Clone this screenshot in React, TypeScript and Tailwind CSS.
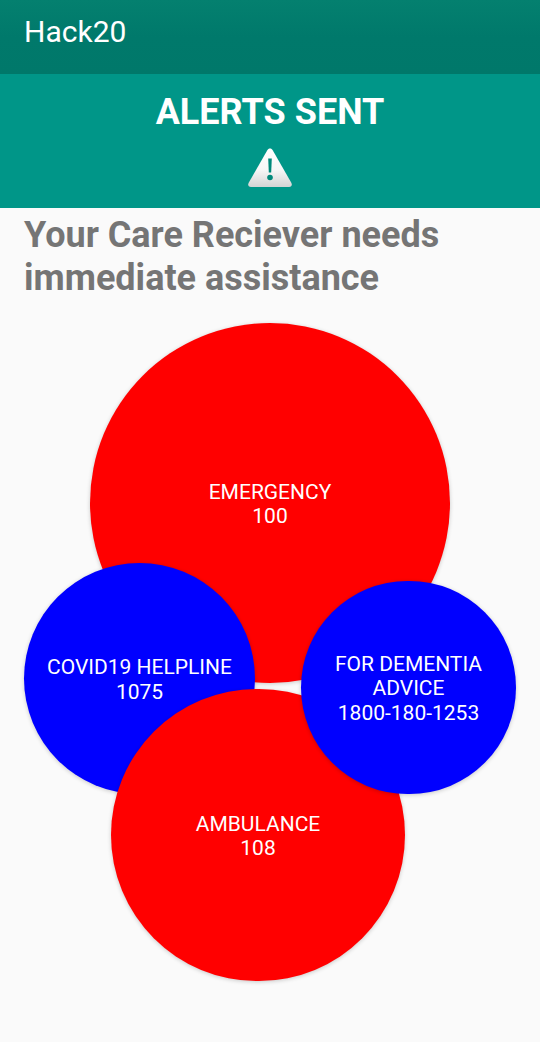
import React from 'react';

interface CircleProps {
  lines: string[];
  className: string;
}

const Circle: React.FC<CircleProps> = ({ lines, className }) => (
  <div
    className={`absolute flex flex-col items-center justify-center rounded-full pt-[2px] text-center text-[21px] leading-[24.5px] text-white shadow-[0_1px_4px_rgba(0,0,0,0.2)] ${className}`}
  >
    {lines.map((line) => (
      <span key={line} className="whitespace-nowrap">
        {line}
      </span>
    ))}
  </div>
);

const WarningIcon = () => (
  <svg width="46" height="42" viewBox="0 0 46 42">
    <defs>
      <linearGradient id="warn" x1="0" y1="0" x2="0" y2="1">
        <stop offset="0" stopColor="#ffffff" />
        <stop offset="0.55" stopColor="#f7f7f7" />
        <stop offset="1" stopColor="#d4d4d4" />
      </linearGradient>
    </defs>
    <path
      d="M23 1.5c1.2 0 2 .6 2.7 1.8l18.6 32.4c1.2 2.2.2 4.3-2.2 4.3H3.9c-2.4 0-3.4-2.1-2.2-4.3L20.3 3.3C21 2.1 21.8 1.5 23 1.5z"
      fill="url(#warn)"
    />
    <path d="M21.2 11.5h3.6l-.6 14h-2.4z" fill="#00897b" />
    <circle cx="23" cy="30.5" r="2.8" fill="#00897b" />
  </svg>
);

export default function App() {
  return (
    <div className="flex h-[1042px] w-[540px] flex-col overflow-hidden bg-[#fafafa] font-['Roboto',sans-serif]">
      <header className="flex h-[74px] items-start bg-gradient-to-b from-[#04806f] via-[#00796b] to-[#00786a] pl-6 pt-[12px] text-[30px] leading-[40px] text-white shadow-[0_2px_3px_rgba(0,0,0,0.12)]">
        Hack20
      </header>

      <section className="flex h-[134px] flex-col items-center bg-[#009688] pt-[17px]">
        <h1 className="text-[36px] font-bold leading-[42px] text-white">ALERTS SENT</h1>
        <div className="mt-[14px]">
          <WarningIcon />
        </div>
      </section>

      <p className="px-6 pt-[6px] text-[36px] font-bold leading-[43px] text-[#757575]">
        Your Care Reciever needs
        <br />
        immediate assistance
      </p>

      <div className="relative flex-1">
        <Circle lines={['EMERGENCY', '100']} className="left-[90px] top-[23px] h-[360px] w-[360px] bg-[#ff0000]" />
        <Circle lines={['COVID19 HELPLINE', '1075']} className="left-[24px] top-[263px] h-[231px] w-[231px] bg-[#0000ff]" />
        <Circle lines={['AMBULANCE', '108']} className="left-[111px] top-[389px] h-[292px] w-[294px] bg-[#ff0000]" />
        <Circle lines={['FOR DEMENTIA', 'ADVICE', '1800-180-1253']} className="left-[301px] top-[281px] h-[213px] w-[215px] bg-[#0000ff]" />
      </div>
    </div>
  );
}
